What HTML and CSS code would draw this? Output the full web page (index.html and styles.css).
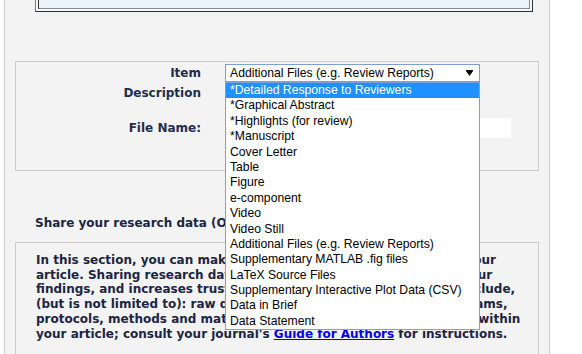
FILE: index.html
```html
<!DOCTYPE html>
<html lang="en">

<head>
    <meta charset="UTF-8" />
    <title>Attach Files</title>
    <link rel="stylesheet" href="styles.css">
</head>

<body>
    <div class="panel">
        <div class="summary">
            <div class="summary-cell"></div>
        </div>

        <div class="item-box">
            <div class="field-row">
                <label class="field-label">Item</label>
                <div class="item-select">
                    <div class="select-box">
                        <span>Additional Files (e.g. Review Reports)</span>
                        <svg class="select-arrow" width="7" height="6" viewBox="0 0 7 6"><path d="M0 0H7V1L3.5 6L0 1Z" fill="#000"/></svg>
                    </div>
                    <ul class="select-list">
                        <li class="active">*Detailed Response to Reviewers</li>
                        <li>*Graphical Abstract</li>
                        <li>*Highlights (for review)</li>
                        <li>*Manuscript</li>
                        <li>Cover Letter</li>
                        <li>Table</li>
                        <li>Figure</li>
                        <li>e-component</li>
                        <li>Video</li>
                        <li>Video Still</li>
                        <li>Additional Files (e.g. Review Reports)</li>
                        <li>Supplementary MATLAB .fig files</li>
                        <li>LaTeX Source Files</li>
                        <li>Supplementary Interactive Plot Data (CSV)</li>
                        <li>Data in Brief</li>
                        <li>Data Statement</li>
                    </ul>
                </div>
            </div>
            <div class="field-row desc-row">
                <label class="field-label">Description</label>
                <input class="desc-field" type="text" name="description">
            </div>
            <div class="field-row file-row">
                <label class="field-label">File Name:</label>
                <input class="file-field" type="text" name="file_name">
            </div>
        </div>

        <h3 class="data-heading">Share your research data (Optional)</h3>
        <div class="data-box">
            <p>In this section, you can make research data open to readers of your article. Sharing research data is a great way to boost reach of your findings, and increases trust in your paper. Research data can include, (but is not limited to): raw data, processed data, software, diagrams, protocols, methods and materials, which can be cited and linked within your article; consult your journal's <a href="#">Guide for Authors</a> for instructions.</p>
        </div>
    </div>
</body>

</html>
```

FILE: styles.css
```css
body {
    margin: 0;
    background: #ffffff;
    font-family: "DejaVu Sans", Verdana, sans-serif;
    font-size: 12px;
    color: #1c2541;
}

.panel {
    margin: -50px 0 0 4px;
    width: 544px;
    background: #f3f3f3;
    border-left: 1px solid #cccccc;
    border-right: 1px solid #cccccc;
    padding-bottom: 40px;
}

.summary {
    width: 492px;
    margin-left: 30px;
    padding: 2px;
    background: #f8f8f8;
    border: 1px solid;
    border-color: #777777 #2c313a #2c313a #777777;
}

.summary-cell {
    height: 54px;
    background: #eaf2fb;
    border: 1px solid;
    border-color: #2c313a #8a8a8a #8a8a8a #2c313a;
}

.item-box {
    margin: 49px 10px 0 10px;
    padding: 2px 0 32px 0;
    border: 1px solid #cccccc;
}

.field-row {
    display: grid;
    grid-template-columns: 185px auto;
    column-gap: 24px;
    align-items: center;
    justify-content: start;
}

.field-label {
    text-align: right;
    font-weight: bold;
    color: #1f2d4f;
}

.desc-row {
    margin-top: 2px;
}

.file-row {
    margin-top: 16px;
}

.desc-field,
.file-field {
    box-sizing: border-box;
    margin: 0;
    padding: 0 4px;
    border: none;
    background: #ffffff;
    font-family: "Liberation Sans", Arial, sans-serif;
    font-size: 12px;
}

.desc-field {
    width: 255px;
    height: 18px;
}

.file-field {
    width: 286px;
    height: 20px;
}

.item-select {
    position: relative;
    width: 255px;
    font-family: "Liberation Sans", Arial, sans-serif;
    font-size: 12.2px;
    color: #000000;
}

.select-box {
    box-sizing: border-box;
    height: 18px;
    display: flex;
    align-items: center;
    justify-content: space-between;
    padding: 0 6px 0 4px;
    background: #ffffff;
    border: 1px solid #7f9ed4;
}

.select-list {
    position: absolute;
    top: 100%;
    left: 0;
    z-index: 5;
    box-sizing: border-box;
    width: 255px;
    margin: 0;
    padding: 0;
    list-style: none;
    background: #ffffff;
    border: 1px solid #7f9fd8;
}

.select-list li {
    padding-left: 4px;
    line-height: 15.4px;
    height: 15.4px;
    white-space: nowrap;
}

.select-list .active {
    background: #1e90ff;
    color: #ffffff;
}

.data-heading {
    margin: 45px 0 11px 30px;
    font-size: 12px;
    line-height: 15px;
}

.data-box {
    margin: 0 10px;
    padding: 10px 11px 30px 20px;
    border: 1px solid #cccccc;
}

.data-box p {
    margin: 0;
    font-weight: bold;
    line-height: 14.7px;
}

.data-box a {
    color: #0000ee;
}
```
